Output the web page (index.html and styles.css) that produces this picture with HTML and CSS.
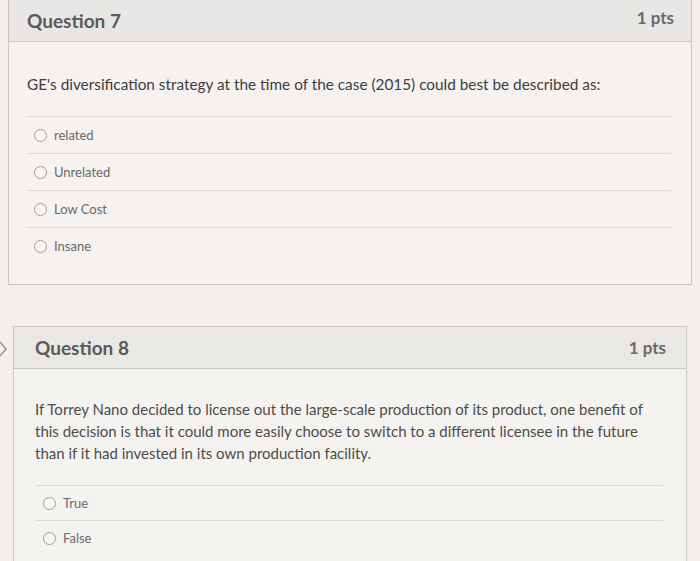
FILE: index.html
```html
<!DOCTYPE html>
<html>
<head>
<meta charset="utf-8">
<link rel="stylesheet" href="styles.css">
</head>
<body>
<div class="page">
  <section class="card card-q7">
    <header class="card-head">
      <h2 class="q-title">Question 7</h2>
      <span class="q-pts">1 pts</span>
    </header>
    <div class="card-body">
      <p class="q-text">GE's diversification strategy at the time of the case (2015) could best be described as:</p>
      <ul class="answers">
        <li class="answer"><span class="radio"></span><span class="a-label">related</span></li>
        <li class="answer"><span class="radio"></span><span class="a-label">Unrelated</span></li>
        <li class="answer"><span class="radio"></span><span class="a-label">Low Cost</span></li>
        <li class="answer"><span class="radio"></span><span class="a-label">Insane</span></li>
      </ul>
    </div>
  </section>

  <section class="card card-q8">
    <svg class="chev" width="10" height="20" viewBox="0 0 10 20"><path d="M1 3 L7 10 L1 17" fill="none" stroke="#9a9896" stroke-width="1.6"/></svg>
    <header class="card-head">
      <h2 class="q-title">Question 8</h2>
      <span class="q-pts">1 pts</span>
    </header>
    <div class="card-body">
      <p class="q-text q-text-long">If Torrey Nano decided to license out the large-scale production of its product, one benefit of this decision is that it could more easily choose to switch to a different licensee in the future than if it had invested in its own production facility.</p>
      <ul class="answers">
        <li class="answer"><span class="radio"></span><span class="a-label">True</span></li>
        <li class="answer"><span class="radio"></span><span class="a-label">False</span></li>
      </ul>
    </div>
  </section>
</div>
</body>
</html>
```

FILE: styles.css
```css
html, body {
  margin: 0;
  padding: 0;
  background: #f3efeb;
  font-family: Lato, "Open Sans", "Liberation Sans", sans-serif;
  overflow: hidden;
}

.page {
  height: 561px;
  overflow: hidden;
}

.card {
  border: 1px solid #c8c5c2;
  background: #f5f2f0;
  position: relative;
}

.card-q7 {
  margin: -2px 8px 0 8px;
}

.card-q8 {
  margin: 41px 13px 0 13px;
  background: #f5f3ef;
}

.card-head {
  height: 42px;
  display: flex;
  align-items: center;
  justify-content: space-between;
  background: #e9e7e5;
  border-bottom: 1px solid #cbc8c5;
  padding: 0 17px 0 18px;
}

.card-q8 .card-head {
  height: 41px;
  padding: 0 20px 0 21px;
  background: #eae8e5;
}

.q-title {
  margin: 0;
  font-size: 19px;
  font-weight: 700;
  color: #5b5a5a;
}

.q-pts {
  font-size: 17px;
  font-weight: 700;
  color: #6a6969;
}

.card-q7 .q-pts {
  margin-top: -6px;
}

.card-body {
  padding: 32px 20px 20px 18px;
}

.card-q8 .card-body {
  padding: 29px 23px 24px 21px;
}

.q-text {
  margin: 0 0 22px 0;
  font-size: 15.35px;
  line-height: 20px;
  color: #3f3e3e;
}

.q-text-long {
  font-size: 15px;
  line-height: 22px;
  color: #4d4c4b;
  margin-bottom: 21px;
}

.answers {
  list-style: none;
  margin: 0;
  padding: 0;
}

.answer {
  height: 36px;
  border-top: 1px solid #dedbd8;
  display: flex;
  align-items: center;
  gap: 7px;
  padding-left: 7px;
}

.card-q8 .answer {
  height: 34px;
  padding-left: 8px;
}

.radio {
  width: 11px;
  height: 11px;
  border: 1px solid #9e9c9b;
  border-radius: 50%;
  background: #f7f6f5;
  flex: none;
}

.a-label {
  font-size: 13px;
  color: #6a6968;
}

.chev {
  position: absolute;
  left: -15px;
  top: 12px;
}
```
